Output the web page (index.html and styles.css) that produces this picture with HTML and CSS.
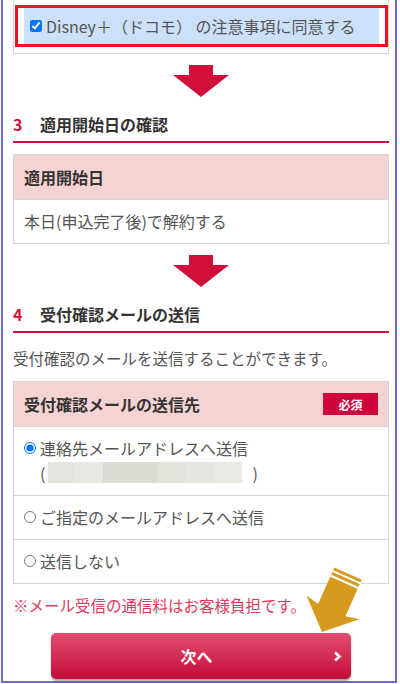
FILE: index.html
```html
<!DOCTYPE html>
<html lang="ja">
<head>
	<meta charset="UTF-8">
	<title>受付確認メールの送信</title>
	<link rel="stylesheet" href="styles.css">
</head>
<body>
	<div class="page">
		<div class="consent">
			<div class="agree">
				<label class="agree-label"><input type="checkbox" checked>Disney＋（ドコモ） の注意事項に同意する</label>
			</div>
		</div>

		<div class="down">
			<svg width="60" height="32" viewBox="0 0 60 32"><polygon points="18,0 42,0 42,10 58,10 30,32 2,10 18,10" fill="#d0103a"/></svg>
		</div>

		<h2 class="step"><span class="num">3</span>適用開始日の確認</h2>
		<div class="box">
			<div class="box-head">適用開始日</div>
			<div class="box-row">本日(申込完了後)で解約する</div>
		</div>

		<div class="down">
			<svg width="60" height="32" viewBox="0 0 60 32"><polygon points="18,0 42,0 42,10 58,10 30,32 2,10 18,10" fill="#d0103a"/></svg>
		</div>

		<h2 class="step"><span class="num">4</span>受付確認メールの送信</h2>
		<p class="lead">受付確認のメールを送信することができます。</p>
		<div class="box">
			<div class="box-head">受付確認メールの送信先<span class="must">必須</span></div>
			<label class="box-row opt">
				<input type="radio" name="mailto" checked>
				<span>連絡先メールアドレスへ送信<span class="addr"><span>(</span><span class="masked"></span><span class="close">)</span></span></span>
			</label>
			<label class="box-row opt">
				<input type="radio" name="mailto">
				<span>ご指定のメールアドレスへ送信</span>
			</label>
			<label class="box-row opt">
				<input type="radio" name="mailto">
				<span>送信しない</span>
			</label>
		</div>
		<p class="note">※メール受信の通信料はお客様負担です。</p>

		<a class="next" href="#">
			<span></span>
			<span class="next-text">次へ</span>
			<svg class="chev" width="9" height="11" viewBox="0 0 9 11"><polyline points="2,1.5 6.5,5.5 2,9.5" fill="none" stroke="#fff" stroke-width="2.6"/></svg>
		</a>

		<!-- 金色の矢印（ボタンの上に重なる） -->
		<svg class="pointer" width="80" height="80" viewBox="0 0 80 80">
			<g transform="translate(22 72) rotate(24)">
				<polygon points="0,0 29,-27 15,-24 15,-64 -15,-64 -15,-24 -29,-27" fill="#d89a1e"/>
				<rect x="-16" y="-61" width="32" height="2" fill="#fff"/>
				<rect x="-16" y="-56" width="32" height="2" fill="#fff"/>
			</g>
		</svg>
	</div>
</body>
</html>
```

FILE: styles.css
```css
*{
	box-sizing:border-box;
}

body{
	margin:0;
	font-family:"Noto Sans CJK JP","Noto Sans",sans-serif;
	color:#555;
	background:#fff;
}

.page{
	position:relative;
	width:396px;
	margin-left:1px;
	padding:0 6px 2px 10px;
	border:2px solid #6a6ad0;
	border-top:0;
}

/* 同意チェック */
.consent{
	border:1px solid #d3d3d3;
	border-top:0;
	padding:5px 0 6px 1px;
}

.agree{
	border:3px solid #f01020;
	padding:0 6px;
}

.agree-label{
	display:flex;
	align-items:center;
	height:36px;
	padding-left:6px;
	background:#cde0fa;
	font-size:16px;
	color:#555;
}

.agree-label input{
	width:12px;
	height:12px;
	margin:0 4px 0 0;
}

.down{
	display:flex;
	justify-content:center;
	margin-top:11px;
	height:32px;
}

.down svg{
	display:block;
}

.step{
	display:flex;
	margin:15px 0 0;
	padding-bottom:5px;
	border-bottom:2px solid #d0103a;
	font-size:16px;
	line-height:24px;
	font-weight:bold;
	color:#333;
}

.step .num{
	width:27px;
	color:#d0103a;
}

.box{
	margin-top:11px;
	border:1px solid #d5d5d5;
}

.box-head{
	display:flex;
	justify-content:space-between;
	align-items:center;
	height:44px;
	padding:0 10px;
	background:#f6d3d3;
	font-size:16px;
	font-weight:bold;
	color:#333;
}

.box-row{
	padding:9px 10px 10px;
	border-top:1px solid #d5d5d5;
	font-size:16px;
	line-height:24px;
}

.must{
	display:flex;
	justify-content:center;
	align-items:center;
	width:55px;
	height:22px;
	background:#d0043c;
	color:#fff;
	font-size:12px;
	font-weight:bold;
}

.lead{
	margin:13px 0 0;
	font-size:15.5px;
	line-height:24px;
}

.opt{
	display:flex;
	align-items:flex-start;
	min-height:44px;
}

.opt input{
	width:12px;
	height:12px;
	margin:6px 4px 0 0;
}

.addr{
	display:flex;
	align-items:center;
	height:25px;
}

.masked{
	width:194px;
	height:21px;
	margin-left:3px;
	background:linear-gradient(90deg,#e5e4de 0,#e5e4de 27px,#e9e8e2 27px,#e9e8e2 55px,#dcdbd3 55px,#dcdbd3 110px,#e2e1da 110px,#e2e1da 137px,#e6e5df 137px,#e6e5df 166px,#eae9e4 166px);
}

.close{
	margin-left:10px;
}

.note{
	margin:9px 0 0;
	font-size:15.5px;
	line-height:24px;
	color:#e03a5c;
}

.next{
	display:grid;
	grid-template-columns:1fr auto 1fr;
	align-items:center;
	width:300px;
	height:46px;
	margin:16px auto 0;
	padding:0 9px 0 0;
	border-radius:5px;
	background:linear-gradient(#e34d70,#c40c3a);
	box-shadow:0 2px 2px rgba(0,0,0,.35);
	color:#fff;
	font-size:16px;
	font-weight:bold;
	text-decoration:none;
}

.next .chev{
	justify-self:end;
}

.pointer{
	position:absolute;
	left:297px;
	top:560px;
}
```
